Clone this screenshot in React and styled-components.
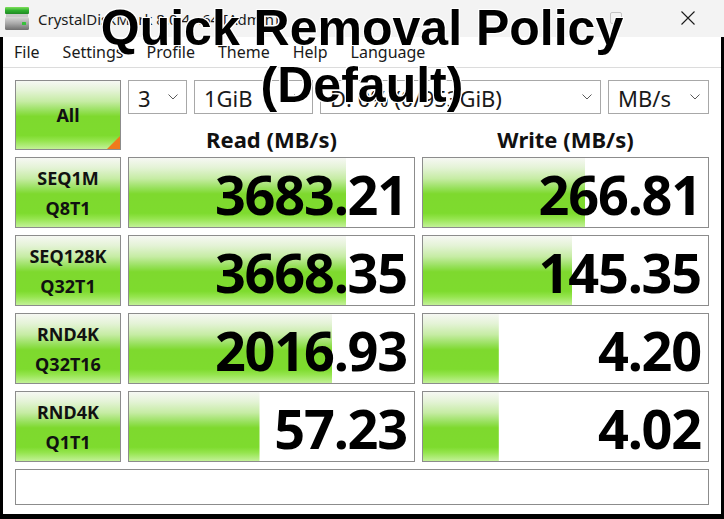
import React from "react";
import styled, { createGlobalStyle } from "styled-components";

const GlobalStyle = createGlobalStyle`
  html, body {
    margin: 0;
    padding: 0;
    background: #000;
  }
  body {
    width: 724px;
    height: 519px;
    overflow: hidden;
    font-family: "Noto Sans", "Open Sans", sans-serif;
    color: #1a1a1a;
  }
`;

const meterGradient = `linear-gradient(
  to bottom,
  #f6f8f3 0%,
  #e4f3d6 14%,
  #c6eca4 30%,
  #96e05a 44%,
  #7ed92e 52%,
  #7edb2e 80%,
  #95e54e 88%,
  #c2f197 100%
)`;

const rows = [
  { top: "SEQ1M", bottom: "Q8T1", read: "3683.21", readPct: 76.2, write: "266.81", writePct: 57 },
  { top: "SEQ128K", bottom: "Q32T1", read: "3668.35", readPct: 76.2, write: "145.35", writePct: 52.4 },
  { top: "RND4K", bottom: "Q32T16", read: "2016.93", readPct: 71.3, write: "4.20", writePct: 26.6 },
  { top: "RND4K", bottom: "Q1T1", read: "57.23", readPct: 45.8, write: "4.02", writePct: 26.6 },
];

const combos = [
  { label: "3", width: 59 },
  { label: "1GiB", width: 119 },
  { label: "D: 0% (0/953GiB)", width: 281 },
  { label: "MB/s", width: 101 },
];

const menus = ["File", "Settings", "Profile", "Theme", "Help", "Language"];

const App = () => {
  return (
    <>
      <GlobalStyle />
      <Window>
        <TitleBar>
          <AppIcon />
          <TitleText>CrystalDiskMark 8.0.4 x64 [Admin]</TitleText>
          <TitleControls>
            <MaxBox />
            <CloseIcon />
          </TitleControls>
        </TitleBar>
        <Body>
          <MenuBar>
            {menus.map((m) => (
              <MenuItem key={m}>{m}</MenuItem>
            ))}
          </MenuBar>
          <Board>
            <AllButton>All</AllButton>
            <ComboRow>
              {combos.map((c) => (
                <Combo key={c.label} $width={c.width}>
                  <span>{c.label}</span>
                  <Chevron />
                </Combo>
              ))}
            </ComboRow>
            <Header>Read (MB/s)</Header>
            <Header>Write (MB/s)</Header>
            {rows.map((r, i) => (
              <React.Fragment key={i}>
                <TestLabel>
                  <span>{r.top}</span>
                  <span>{r.bottom}</span>
                </TestLabel>
                <Meter style={{ backgroundSize: `${r.readPct}% 100%` }}>
                  {r.read}
                </Meter>
                <Meter style={{ backgroundSize: `${r.writePct}% 100%` }}>
                  {r.write}
                </Meter>
              </React.Fragment>
            ))}
            <Comment />
          </Board>
        </Body>
        <Caption>
          Quick Removal Policy
          <br />
          (Default)
        </Caption>
      </Window>
    </>
  );
};

export default App;

const AppIcon = () => (
  <svg width="24" height="24" viewBox="0 0 24 24">
    <defs>
      <linearGradient id="tray" x1="0" y1="0" x2="0" y2="1">
        <stop offset="0" stopColor="#7ee05a" />
        <stop offset="0.5" stopColor="#2fae2f" />
        <stop offset="1" stopColor="#1e8a24" />
      </linearGradient>
      <linearGradient id="drive" x1="0" y1="0" x2="0" y2="1">
        <stop offset="0" stopColor="#d8d8d8" />
        <stop offset="0.5" stopColor="#a8a8a8" />
        <stop offset="1" stopColor="#6e6e6e" />
      </linearGradient>
    </defs>
    <rect x="0" y="0" width="24" height="7" rx="1" fill="url(#tray)" />
    <rect x="1" y="7" width="22" height="3" fill="#c9c9c9" />
    <rect x="0" y="10" width="24" height="13" rx="1.5" fill="url(#drive)" />
    <rect x="17" y="15" width="4" height="3" rx="0.5" fill="#36c13a" />
  </svg>
);

const Chevron = () => (
  <svg width="10" height="6" viewBox="0 0 10 6">
    <path d="M0.5 0.5 L5 5 L9.5 0.5" fill="none" stroke="#5a5a5a" strokeWidth="1" />
  </svg>
);

const CloseIcon = () => (
  <svg width="14" height="14" viewBox="0 0 14 14">
    <path d="M0.5 0.5 L13.5 13.5 M13.5 0.5 L0.5 13.5" stroke="#1a1a1a" strokeWidth="1.1" />
  </svg>
);

const Window = styled.div`
  position: relative;
  width: 724px;
  height: 519px;
  display: flex;
  flex-direction: column;
`;

const TitleBar = styled.div`
  height: 37px;
  flex: none;
  display: flex;
  align-items: center;
  background: #f3f3f3;
  padding-left: 5px;
  box-sizing: border-box;
`;

const TitleText = styled.div`
  margin-left: 9px;
  padding-top: 1px;
  font-size: 15px;
  color: #1b1b1b;
  white-space: nowrap;
`;

const TitleControls = styled.div`
  margin-left: auto;
  display: flex;
  align-items: center;
  gap: 59px;
  padding-right: 29px;
  padding-bottom: 1px;
`;

const MaxBox = styled.div`
  width: 10px;
  height: 10px;
  border: 1px solid #c4c4c4;
  border-radius: 2px;
`;

const Body = styled.div`
  margin: 0 3px;
  background: #fff;
  display: flex;
  flex-direction: column;
`;

const MenuBar = styled.div`
  height: 30px;
  display: flex;
  align-items: center;
  gap: 23px;
  padding-left: 11px;
  border-bottom: 1px solid #dcdcdc;
`;

const MenuItem = styled.div`
  font-size: 16px;
  line-height: 30px;
  color: #1a1a1a;
`;

const Board = styled.div`
  display: grid;
  grid-template-columns: 106px 287px 287px;
  grid-template-rows: 34px 29px repeat(4, 71px) 36px;
  gap: 7px;
  padding: 12px 12px 9px;
`;

const GreenBox = styled.div`
  box-sizing: border-box;
  border: 1px solid #8c8c8c;
  background: ${meterGradient};
`;

const AllButton = styled(GreenBox)`
  position: relative;
  grid-row: 1 / 3;
  display: flex;
  align-items: center;
  justify-content: center;
  font-weight: 700;
  font-size: 18px;
  color: #111;

  &::after {
    content: "";
    position: absolute;
    right: 0;
    bottom: 0;
    border-style: solid;
    border-width: 0 0 13px 13px;
    border-color: transparent transparent #f07a1c transparent;
  }
`;

const ComboRow = styled.div`
  grid-column: 2 / 4;
  display: flex;
  gap: 7px;
`;

const Combo = styled.div`
  width: ${(p) => p.$width}px;
  box-sizing: border-box;
  border: 1px solid #a8a8a8;
  background: #fff;
  display: flex;
  align-items: center;
  justify-content: space-between;
  padding: 2px 8px 0 9px;
  font-size: 22px;
  color: #1a1a1a;
  white-space: nowrap;
  overflow: hidden;

  svg {
    flex: none;
    margin-bottom: 2px;
  }
`;

const Header = styled.div`
  display: flex;
  align-items: flex-end;
  justify-content: center;
  font-weight: 700;
  font-size: 22px;
  line-height: 1;
  color: #111;
`;

const TestLabel = styled(GreenBox)`
  display: flex;
  flex-direction: column;
  align-items: center;
  justify-content: center;
  font-weight: 700;
  font-size: 18px;
  line-height: 30px;
  color: #111;
`;

const Meter = styled.div`
  box-sizing: border-box;
  border: 1px solid #8c8c8c;
  background-color: #fff;
  background-image: ${meterGradient};
  background-repeat: no-repeat;
  display: flex;
  align-items: center;
  justify-content: flex-end;
  padding: 3px 7px 0 0;
  font-weight: 700;
  font-size: 54px;
  line-height: 1;
  letter-spacing: -1.2px;
  color: #000;
`;

const Comment = styled.div`
  grid-column: 1 / -1;
  box-sizing: border-box;
  border: 1px solid #8c8c8c;
  background: #fff;
`;

const Caption = styled.div`
  position: absolute;
  top: 0;
  left: 0;
  width: 724px;
  text-align: center;
  font-family: "Liberation Sans", Arial, sans-serif;
  font-weight: 700;
  font-size: 50px;
  line-height: 57px;
  color: #000;
  pointer-events: none;
  text-shadow: 1px 0 0 #fff, -1px 0 0 #fff, 0 1px 0 #fff, 0 -1px 0 #fff,
    1px 1px 0 #fff, -1px -1px 0 #fff, 1px -1px 0 #fff, -1px 1px 0 #fff;
`;
